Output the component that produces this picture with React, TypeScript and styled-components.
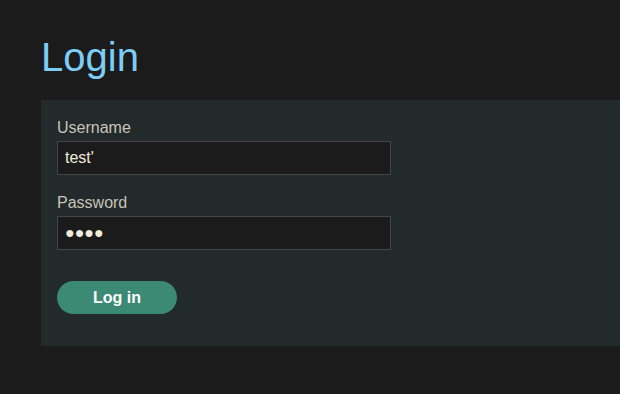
import React from "react";
import styled, { createGlobalStyle } from "styled-components";

const Global = createGlobalStyle`
  html, body {
    margin: 0;
    padding: 0;
    background: #1b1b1b;
    overflow: hidden;
  }
  body {
    font-family: "Liberation Sans", Arial, sans-serif;
  }
`;

const Page = styled.main`
  padding: 34px 0 0 41px;
  width: 620px;
  box-sizing: border-box;
  overflow: hidden;
`;

const Title = styled.h1`
  margin: 0 0 20px 0;
  font-size: 40px;
  font-weight: 400;
  line-height: 46px;
  color: #7ecdf7;
`;

const Panel = styled.form`
  background: #222a2b;
  padding: 19px 16px 32px 16px;
  display: flex;
  flex-direction: column;
`;

const Field = styled.div<{ $mb: number }>`
  display: flex;
  flex-direction: column;
  gap: 4px;
  margin-bottom: ${(p) => p.$mb}px;
`;

const Label = styled.label`
  font-size: 16px;
  line-height: 18px;
  color: #c9c4b8;
`;

const Input = styled.input`
  box-sizing: border-box;
  width: 334px;
  height: 34px;
  margin: 0;
  padding: 0 7px;
  background: #1b1b1b;
  border: 1px solid #444748;
  border-radius: 0;
  color: #f1ebdc;
  font-family: "Liberation Sans", Arial, sans-serif;
  font-size: 16px;
  outline: none;
`;

const Button = styled.button`
  width: 120px;
  height: 33px;
  border: none;
  border-radius: 17px;
  background: #3c8a74;
  color: #ffffff;
  font-family: "Liberation Sans", Arial, sans-serif;
  font-weight: 700;
  font-size: 16px;
  padding: 0;
  cursor: pointer;
`;

export default function App() {
  return (
    <>
      <Global />
      <Page>
        <Title>Login</Title>
        <Panel onSubmit={(e) => e.preventDefault()}>
          <Field $mb={19}>
            <Label htmlFor="u">Username</Label>
            <Input id="u" type="text" defaultValue="test'" />
          </Field>
          <Field $mb={31}>
            <Label htmlFor="p">Password</Label>
            <Input id="p" type="text" autoComplete="off" readOnly value={"\u25CF\u25CF\u25CF\u25CF"} />
          </Field>
          <div>
            <Button type="submit">Log in</Button>
          </div>
        </Panel>
      </Page>
    </>
  );
}
